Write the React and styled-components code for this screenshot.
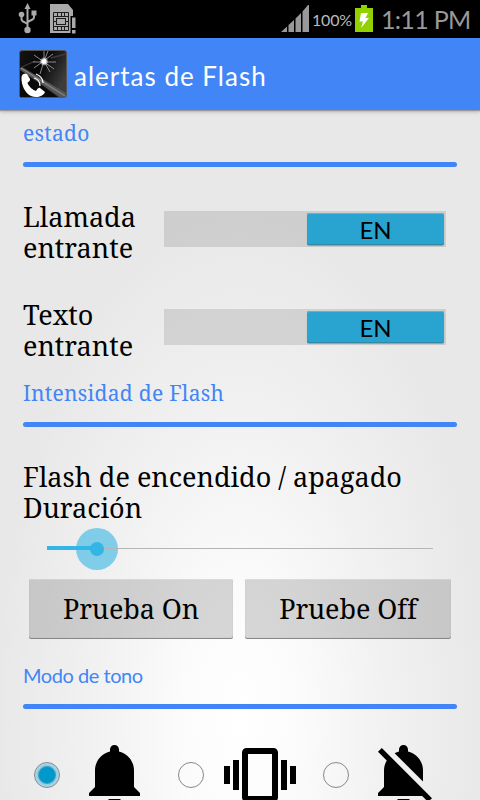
import React, { useState } from 'react';
import styled, { createGlobalStyle } from 'styled-components';

const GlobalStyle = createGlobalStyle`
  * {
    box-sizing: border-box;
  }
  body {
    margin: 0;
    overflow: hidden;
  }
`;

const serif = `'Droid Serif', 'Noto Serif', 'DejaVu Serif', serif`;
const casual = `Lato, 'Noto Sans', sans-serif`;

const Screen = styled.div`
  width: 480px;
  height: 800px;
  overflow: hidden;
  display: flex;
  flex-direction: column;
  background: radial-gradient(ellipse 245px 510px at 240px 720px, #fff 0%, #fbfbfb 25%, #f1f1f1 60%, #e8e8e8 100%);
  color: #000;
`;

const StatusBar = styled.div`
  flex: none;
  height: 38px;
  padding: 0 10px 1px 18px;
  display: flex;
  align-items: center;
  background: #000;
  color: #999;
  font-family: ${casual};
  white-space: nowrap;
`;

const StatusIcon = styled.svg`
  flex: none;
  display: block;
  margin-left: ${props => props.$gap || 0}px;
`;

const Spacer = styled.div`
  flex: 1;
`;

const Percent = styled.span`
  width: 43px;
  margin: 2px 0 0 3px;
  font-size: 16px;
  letter-spacing: -0.2px;
  color: #bbb;
`;

const Clock = styled.span`
  width: 89px;
  margin-left: 8px;
  font-size: 25px;
  letter-spacing: -0.7px;
`;

const Header = styled.header`
  flex: none;
  height: 72px;
  padding-left: 19px;
  display: flex;
  align-items: center;
  gap: 7px;
  background: #4285f6;
  box-shadow: 0 1px 1px #999, 0 2px 4px rgba(0, 0, 0, 0.2);
`;

const Title = styled.h1`
  margin: 3px 0 0;
  font: 400 26px ${casual};
  letter-spacing: 1px;
  color: #fff;
`;

const Section = styled.section`
  flex: none;
  height: ${props => props.$height}px;
  margin: 0 23px;
  display: flex;
  flex-direction: column;
  justify-content: flex-end;
`;

const SectionTitle = styled.h2`
  margin: 0 0 15px;
  font: 400 ${props => (props.$casual ? 20 : 21)}px/28px ${props => (props.$casual ? casual : serif)};
  letter-spacing: ${props => (props.$casual ? -0.45 : 0.28)}px;
  color: #4285f6;
`;

const Rule = styled.div`
  height: 5px;
  border-radius: 3px;
  background: #4285f6;
`;

const SwitchList = styled.div`
  flex: none;
  padding: 16px 34px 0 23px;
`;

const SwitchRow = styled.div`
  height: 98px;
  display: flex;
  align-items: center;
  justify-content: space-between;
`;

const Label = styled.div`
  font: 400 27px/31px ${serif};
`;

const SwitchLabel = styled(Label)`
  width: 141px;
`;

const Track = styled.button`
  width: 282px;
  height: 36px;
  margin: 0 0 6px;
  padding: 2px;
  border: 0;
  display: flex;
  justify-content: ${props => (props.$on ? 'flex-end' : 'flex-start')};
  background: rgba(0, 0, 0, 0.11);
`;

const Thumb = styled.span`
  width: 137px;
  height: 32px;
  padding-top: 1px;
  border-radius: 2px;
  background: ${props => (props.$on ? '#29a3cf' : '#aaa')};
  box-shadow: inset 0 1px #62b5d2, inset 0 -1px #3487a5, 0 1px 1px rgba(0, 0, 0, 0.25);
  font: 400 24px/32px ${casual};
  color: #000;
  text-align: center;
`;

const FlashLabel = styled(Label)`
  flex: none;
  margin: 34px 23px 0;
`;

const Slider = styled.div`
  flex: none;
  height: 42px;
  margin: 4px 47px 0;
  display: flex;
  align-items: center;
`;

const Filled = styled.div`
  height: 4px;
  margin-right: -21px;
  background: #33b5e5;
`;

const Knob = styled.div`
  flex: none;
  width: 42px;
  height: 42px;
  margin-top: 2px;
  border-radius: 50%;
  display: flex;
  align-items: center;
  justify-content: center;
  background: rgba(51, 181, 229, 0.6);

  &::after {
    content: '';
    width: 14px;
    height: 14px;
    border-radius: 50%;
    background: #33b5e5;
  }
`;

const Remaining = styled.div`
  flex: 1;
  height: 1px;
  margin-left: -14px;
  background: #b5b5b5;
`;

const Buttons = styled.div`
  flex: none;
  margin: 10px 29px 0;
  display: grid;
  grid-template-columns: 204px 206px;
  gap: 12px;
`;

const TestButton = styled.button`
  height: 59px;
  padding: 1px 0 0;
  border: 0;
  border-radius: 2px;
  background: rgba(0, 0, 0, 0.15);
  box-shadow: inset 0 1px rgba(255, 255, 255, 0.25), inset 0 0 1px rgba(0, 0, 0, 0.25), 0 1px #888;
  font: 400 27px/58px ${serif};
  letter-spacing: -0.1px;
  color: #000;
`;

const Modes = styled.div`
  flex: none;
  margin: 30px 0 0 34px;
  display: grid;
  grid-template-columns: 144px 145px 144px;
`;

const Mode = styled.div`
  display: flex;
  align-items: center;
  gap: 20px;
`;

const Radio = styled.button`
  width: 26px;
  height: 26px;
  padding: 0;
  border: 1px solid #888;
  border-radius: 50%;
  display: flex;
  align-items: center;
  justify-content: center;
  background: ${props => (props.$checked ? 'radial-gradient(circle, #8ecde5 55%, #e3f1f6 95%)' : 'transparent')};

  &::after {
    content: '';
    display: ${props => (props.$checked ? 'block' : 'none')};
    width: 16px;
    height: 16px;
    border: 1px solid #4c9bb8;
    border-radius: 50%;
    background: #0099cc;
  }
`;

const ModeIcon = styled.svg`
  flex: none;
  width: 72px;
  height: 72px;
`;

const modes = [
  {
    id: 'Sonido',
    path: 'M11.5 22c1.1 0 2-.9 2-2h-4c0 1.1.9 2 2 2zm6.5-6v-5.5c0-3.07-2.13-5.64-5-6.32V3.5c0-.83-.67-1.5-1.5-1.5S10 2.67 10 3.5v.68c-2.87.68-5 3.25-5 6.32V16l-2 2v1h17v-1l-2-2z',
  },
  {
    id: 'Vibrar',
    path: 'M0 15h2V9H0v6zm3 2h2V7H3v10zm19-8v6h2V9h-2zm-3 8h2V7h-2v10zM16.5 3h-9C6.67 3 6 3.67 6 4.5v15c0 .83.67 1.5 1.5 1.5h9c.83 0 1.5-.67 1.5-1.5v-15c0-.83-.67-1.5-1.5-1.5zM16 19H8V5h8v14z',
  },
  {
    id: 'Silencio',
    path: 'M11.5 22c1.1 0 2-.9 2-2h-4c0 1.1.9 2 2 2zM18 10.5c0-3.07-2.13-5.64-5-6.32V3.5c0-.83-.67-1.5-1.5-1.5S10 2.67 10 3.5v.68c-.51.12-.99.32-1.45.56L18 14.18V10.5zm-.27 8.5l2 2L21 19.73 4.27 3 3 4.27l2.92 2.92C5.34 8.16 5 9.29 5 10.5V16l-2 2v1h14.73z',
  },
];

function AppLogo() {
  return (
    <svg width="48" height="48" viewBox="0 0 48 48">
      <defs>
        <linearGradient id="logo-bg" x1="0" y1="0" x2="1" y2="0.5">
          <stop offset="0" stopColor="#151515" />
          <stop offset="0.5" stopColor="#050505" />
          <stop offset="1" stopColor="#3c3c3c" />
        </linearGradient>
        <radialGradient id="logo-glow">
          <stop offset="0" stopColor="#fff" />
          <stop offset="0.4" stopColor="#fff" />
          <stop offset="1" stopColor="#fff" stopOpacity="0" />
        </radialGradient>
      </defs>
      <rect x="0.5" y="0.5" width="47" height="47" rx="2.5" fill="url(#logo-bg)" stroke="#555" />
      <path d="M1 20L39 47H1z" fill="#0a0a0a" />
      <path d="M1 18L3 17L47 43V47H41L1 20z" fill="#555" />
      <path d="M2 18L46 46" stroke="#858585" strokeWidth="1.2" />
      <path d="M3 17L16 11M32 8L47 4" stroke="#3b3b3b" strokeWidth="1.3" />
      <path d="M25 1V11L21 24M14 12H37M15 5L35 19M34 4L15 18M29 1L25 11L31 22" fill="none" stroke="#aaa" strokeWidth="0.8" />
      <circle cx="25" cy="11.5" r="4.5" fill="url(#logo-glow)" />
      <path d="M2.5 27C3 24 5 23 8 24L11 29C11.5 31 9 32 8.5 33C10 37 14 40 17 41C18 40 19 37 21 38L26 42C24 47 17 48 12 46C6 43 2 35 2.5 27z" fill="#fff" />
      <path d="M15 28c4 1 6 4 6 8M17 24c5 2 7 5 7 9" fill="none" stroke="#fff" strokeWidth="1.2" />
    </svg>
  );
}

function UsbIcon() {
  return (
    <StatusIcon width="19" height="31" viewBox="0 0 19 31" fill="none" stroke="#aaa" strokeWidth="2">
      <path d="M9.5 5V26M3.5 12V16Q3.5 18 6 19L9.5 21M16 10V14Q16 16 13.5 17L9.5 19" />
      <path d="M9.5 0L12.5 6H6.5z" fill="#aaa" stroke="none" />
      <circle cx="3.5" cy="11.5" r="2.8" fill="#aaa" stroke="none" />
      <rect x="13.5" y="7.5" width="5" height="5" fill="#aaa" stroke="none" />
      <circle cx="9.5" cy="27" r="3.2" fill="#aaa" stroke="none" />
    </StatusIcon>
  );
}

function SimIcon() {
  return (
    <StatusIcon $gap={13} width="26" height="30" viewBox="0 0 26 30">
      <path d="M0 0H18L23 6V12H20.5V29H0z" fill="#aaa" />
      <g fill="none" stroke="#1c1c1c">
        <path d="M3.5 8.5H18.5V26.5H3.5z" />
        <path d="M7.5 9V12.5M11.5 9V12.5M14.5 9V12.5M7.5 22.5V26M11.5 22.5V26M14.5 22.5V26M4 12.5H18M4 22.5H18M4 17.5H6.500M15.500 17.5H18" />
        <rect x="6.5" y="14.5" width="9" height="6" />
      </g>
      <path d="M22 13.5H25.5V24H22zM22 26H25.5V29.5H22z" fill="#aaa" />
    </StatusIcon>
  );
}

function SignalIcon() {
  return (
    <StatusIcon width="28" height="27" viewBox="0 0 28 27">
      <path d="M0 27L6 21.5V27zM7.5 27V20L13 15V27zM14.5 27V13.5L20 8V27zM21.5 27V6.5L27 0H28V27z" fill="#999" />
    </StatusIcon>
  );
}

function BatteryIcon() {
  return (
    <StatusIcon width="18" height="27" viewBox="0 0 18 27">
      <path d="M6 0H12V3H18V27H0V3H6z" fill="#91d100" />
      <path d="M6 8H13L10.5 13H14L6 23L8 16.5H4.500z" fill="#fff" />
    </StatusIcon>
  );
}

function Switch({ label }) {
  const [on, setOn] = useState(true);
  return (
    <SwitchRow>
      <SwitchLabel>{label}</SwitchLabel>
      <Track $on={on} onClick={() => setOn(!on)}>
        <Thumb $on={on}>EN</Thumb>
      </Track>
    </SwitchRow>
  );
}

export default function App() {
  const [mode, setMode] = useState('Sonido');
  const progress = 50;

  return (
    <Screen>
      <GlobalStyle />
      <StatusBar>
        <UsbIcon />
        <SimIcon />
        <Spacer />
        <SignalIcon />
        <Percent>100%</Percent>
        <BatteryIcon />
        <Clock>1:11 PM</Clock>
      </StatusBar>
      <Header>
        <AppLogo />
        <Title>alertas de Flash</Title>
      </Header>

      <Section $height={57}>
        <SectionTitle>estado</SectionTitle>
        <Rule />
      </Section>
      <SwitchList>
        <Switch label="Llamada entrante" />
        <Switch label="Texto entrante" />
      </SwitchList>

      <Section $height={48}>
        <SectionTitle>Intensidad de Flash</SectionTitle>
        <Rule />
      </Section>
      <FlashLabel>Flash de encendido / apagado Duración</FlashLabel>
      <Slider>
        <Filled style={{ width: progress }} />
        <Knob />
        <Remaining />
      </Slider>
      <Buttons>
        <TestButton>Prueba On</TestButton>
        <TestButton>Pruebe Off</TestButton>
      </Buttons>

      <Section $height={71}>
        <SectionTitle $casual>Modo de tono</SectionTitle>
        <Rule />
      </Section>
      <Modes>
        {modes.map(({ id, path }) => (
          <Mode key={id}>
            <Radio $checked={mode === id} onClick={() => setMode(id)} />
            <ModeIcon viewBox="0 0 24 24">
              <path d={path} />
            </ModeIcon>
          </Mode>
        ))}
      </Modes>
    </Screen>
  );
}
